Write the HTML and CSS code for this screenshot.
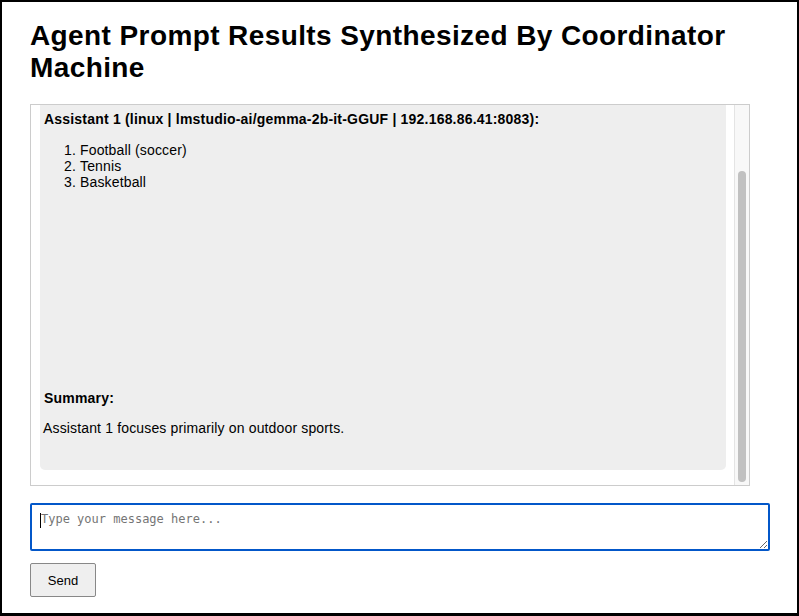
FILE: index.html
```html
<!DOCTYPE html>
<html lang="en">
<head>
<meta charset="utf-8">
<title>Agent Prompt Results</title>
<link rel="stylesheet" href="styles.css">
</head>
<body>
<div class="frame">
  <h1 class="title">Agent Prompt Results Synthesized By Coordinator Machine</h1>
  <div class="chat-box">
    <div class="chat-scroll">
      <div class="chat-inner">
        <div class="message">
          <p class="msg-head">Assistant 1 (linux | lmstudio-ai/gemma-2b-it-GGUF | 192.168.86.41:8083):</p>
          <ol class="msg-list">
            <li>Football (soccer)</li>
            <li>Tennis</li>
            <li>Basketball</li>
          </ol>
          <div class="msg-block"></div>
          <p class="msg-head summary">Summary:</p>
          <p class="msg-text">Assistant 1 focuses primarily on outdoor sports.</p>
        </div>
      </div>
    </div>
    <div class="scrollbar"><div class="thumb"></div></div>
  </div>
  <textarea class="input" placeholder="Type your message here..."></textarea>
  <button class="send" type="button">Send</button>
</div>
</body>
</html>
```
FILE: styles.css
```css
html, body {
  margin: 0;
  padding: 0;
  background: #fff;
}
body {
  font-family: "Liberation Sans", Arial, sans-serif;
  color: #000;
}
.frame {
  box-sizing: border-box;
  height: 616px;
  border-style: solid;
  border-color: #000;
  border-width: 2px 2px 3px 2px;
  padding: 18px 28px 0 28px;
  display: flex;
  flex-direction: column;
  align-items: flex-start;
}
.title {
  margin: 0 0 20px 0;
  font-size: 28px;
  line-height: 32px;
  font-weight: bold;
  letter-spacing: 0.4px;
}
.chat-box {
  box-sizing: border-box;
  width: 720px;
  height: 382px;
  border: 1px solid #ccc;
  display: flex;
}
.chat-scroll {
  flex: 1;
  overflow: hidden;
  display: flex;
  flex-direction: column-reverse;
}
.scrollbar {
  box-sizing: border-box;
  width: 15px;
  background: #f8f8f8;
  border-left: 1px solid #e4e4e4;
  display: flex;
  flex-direction: column;
  justify-content: flex-end;
  padding: 0 3px 3px 3px;
}
.thumb {
  height: 311px;
  width: 8px;
  border-radius: 4px;
  background: #c1c1c1;
}
.chat-inner {
  padding: 10px 8px 15px 9px;
}
.message {
  background: #eee;
  border-radius: 5px;
  padding: 80px 4px 20px 4px;
  font-size: 14px;
  line-height: 16px;
  letter-spacing: 0.15px;
}
.msg-head {
  margin: 0;
  font-weight: bold;
  letter-spacing: 0.2px;
}
.msg-list {
  margin: 15px 0 14px 0;
  padding-left: 36px;
}
.msg-block {
  height: 180px;
  margin-right: -1px;
  background: #eee;
}
.summary {
  margin-top: 6px;
}
.msg-text {
  margin: 14px 0 14px -1px;
}
.input {
  box-sizing: border-box;
  width: 740px;
  height: 48px;
  margin: 17px 0 0 0;
  padding: 7px 8px 7px 9px;
  border: 2px solid #0357c9;
  border-radius: 2px;
  outline: none;
  font-family: "DejaVu Sans Mono", monospace;
  font-size: 12px;
  line-height: 14px;
  color: #000;
  background: #fff linear-gradient(#000, #000) no-repeat 8px 8px / 1px 15px;
}
.input::placeholder {
  color: #757575;
}
.send {
  box-sizing: border-box;
  width: 66px;
  height: 34px;
  margin-top: 12px;
  background: #efefef;
  border: 1px solid #888;
  border-radius: 2px;
  font-family: "Liberation Sans", Arial, sans-serif;
  font-size: 13px;
  color: #000;
  padding: 0;
}
```
